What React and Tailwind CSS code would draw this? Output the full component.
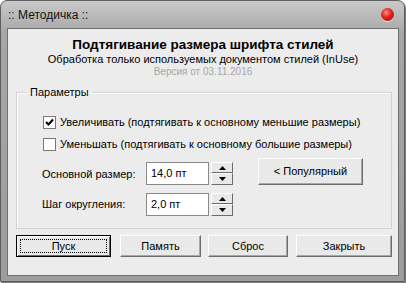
import React, { useState } from "react";

const Btn = ({ children, className = "", def = false }) => (
  <button
    className={`h-[22px] bg-[#e9e9e9] text-[11px] text-black flex items-center justify-center ${
      def
        ? "border border-black p-[3px] shadow-[inset_1px_1px_0_#ffffff,inset_-1px_-1px_0_#6b6b6b]"
        : "border-t border-l border-t-white border-l-white border-r border-b border-r-[#6b6b6b] border-b-[#6b6b6b] shadow-[inset_-1px_-1px_0_#a8a8a8]"
    } ${className}`}
  >
    {def ? (
      <span className="w-full h-full border border-dotted border-black flex items-center justify-center">
        {children}
      </span>
    ) : (
      children
    )}
  </button>
);

const Spin = () => (
  <div className="ml-[2px] w-[22px] h-[23px] flex flex-col">
    <div className="h-[11px] bg-[#e9e9e9] border-t border-l border-white border-r border-b border-r-[#6b6b6b] border-b-[#6b6b6b] flex items-center justify-center">
      <svg width="7" height="4" viewBox="0 0 7 4">
        <path d="M3.5 0 L7 4 L0 4 Z" fill="#000" />
      </svg>
    </div>
    <div className="h-[12px] bg-[#e9e9e9] border-t border-l border-white border-r border-b border-r-[#6b6b6b] border-b-[#6b6b6b] flex items-center justify-center">
      <svg width="7" height="4" viewBox="0 0 7 4">
        <path d="M0 0 L7 0 L3.5 4 Z" fill="#000" />
      </svg>
    </div>
  </div>
);

const Check = ({ checked, label, onClick }) => (
  <div className="flex items-center h-[14px] cursor-default" onClick={onClick}>
    <div className="w-[13px] h-[13px] border border-[#7a7a7a] bg-white flex items-center justify-center">
      {checked && (
        <svg width="9" height="9" viewBox="0 0 9 9">
          <path d="M1 4 L3.5 6.5 L8 1.5" stroke="#000" strokeWidth="2" fill="none" />
        </svg>
      )}
    </div>
    <span className="ml-[4px]">{label}</span>
  </div>
);

export default function App() {
  const [inc, setInc] = useState(true);
  const [dec, setDec] = useState(false);

  return (
    <div className="w-[406px] h-[283px] bg-white font-['Liberation_Sans',Arial,sans-serif] text-[11px] text-black">
      <div className="w-[405px] h-[282px] rounded-t-[7px] border border-[#5e5e5e] bg-gradient-to-b from-[#c9c9c9] via-[#a6a6a6] via-[12%] to-[#9c9c9c] flex flex-col shadow-[1px_1px_0_#7c7c7c]">
        {/* title bar */}
        <div className="h-[27px] flex items-center justify-between pl-[7px] pr-[10px]">
          <span className="text-[12px] text-[#111]">:: Методичка ::</span>
          <div className="w-[13px] h-[13px] rounded-full bg-[radial-gradient(circle_at_40%_35%,#ff8a80_0%,#e21f1a_45%,#9c0d0a_100%)] shadow-[0_1px_0_#e8e8e8]" />
        </div>

        {/* client */}
        <div className="ml-[6px] w-[392px] h-[248px] border border-[#6f6f6f] bg-[#ececec] flex flex-col">
          <div className="text-center pt-[8px]">
            <div className="text-[13.5px] font-bold leading-[16px]">
              Подтягивание размера шрифта стилей
            </div>
            <div className="leading-[13px]">
              Обработка только используемых документом стилей (InUse)
            </div>
            <div className="text-[10px] leading-[12px] text-[#a6a6a6]">
              Версия от 03.11.2016
            </div>
          </div>

          <fieldset className="mt-[7px] ml-[8px] w-[376px] border border-[#d2d2d2] shadow-[inset_1px_1px_0_#fff] pb-[12px]">
            <legend className="ml-[10px] px-[3px] leading-[14px]">Параметры</legend>
            <div className="pl-[25px]">
              <div className="mt-[16px] pl-[1px]">
                <Check
                  checked={inc}
                  onClick={() => setInc(!inc)}
                  label="Увеличивать (подтягивать к основному меньшие размеры)"
                />
              </div>
              <div className="mt-[8px] pl-[1px]">
                <Check
                  checked={dec}
                  onClick={() => setDec(!dec)}
                  label="Уменьшать (подтягивать к основному большие размеры)"
                />
              </div>

              <div className="mt-[7px] flex items-start">
                <span className="w-[104px] mt-[8px]">Основной размер:</span>
                <div className="mt-[4px] flex">
                  <div className="w-[63px] h-[23px] border border-[#8a8a8a] bg-white pl-[4px] flex items-center">
                    14,0 пт
                  </div>
                  <Spin />
                </div>
                <Btn className="ml-[25px] w-[105px] !h-[27px]">&lt; Популярный</Btn>
              </div>

              <div className="mt-[8px] flex items-center">
                <span className="w-[104px]">Шаг округления:</span>
                <div className="flex">
                  <div className="w-[63px] h-[23px] border border-[#8a8a8a] bg-white pl-[4px] flex items-center">
                    2,0 пт
                  </div>
                  <Spin />
                </div>
              </div>
            </div>
          </fieldset>

          <div className="mt-[6px] ml-[8px] flex">
            <Btn def className="w-[95px]">Пуск</Btn>
            <Btn className="ml-[9px] w-[81px]">Память</Btn>
            <Btn className="ml-[7px] w-[80px]">Сброс</Btn>
            <Btn className="ml-[8px] w-[96px]">Закрыть</Btn>
          </div>
        </div>
      </div>
    </div>
  );
}
